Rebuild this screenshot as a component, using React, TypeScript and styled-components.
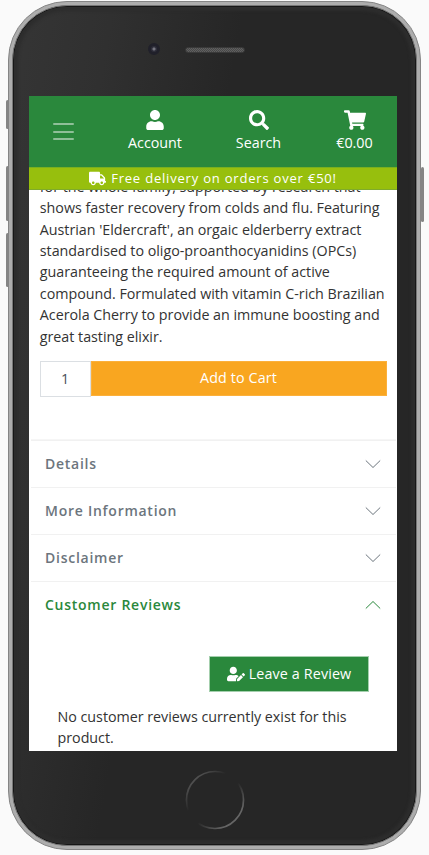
import React from "react";
import styled, { createGlobalStyle } from "styled-components";
import { FaUser, FaSearch, FaShoppingCart, FaTruck, FaUserEdit } from "react-icons/fa";

const GlobalStyle = createGlobalStyle`
  * { box-sizing: border-box; }
  body {
    margin: 0;
    background: #fafafa;
    font-family: "Open Sans", "Noto Sans", sans-serif;
    font-size: 14.3px;
    color: #333;
    overflow: hidden;
  }
`;

const Stage = styled.main`
  width: 429px;
  height: 855px;
  padding: 1px 0 0 8px;
`;

const Phone = styled.div`
  position: relative;
  width: 413px;
  height: 849px;
  border-radius: 59px;
  border: 1px solid #858585;
  background: #adadad;
  padding: 3px;
`;

const Rim = styled.div`
  height: 100%;
  border-radius: 55px;
  border: 1px solid #777;
  background: #171717;
  padding: 1px;
`;

const Bezel = styled.div`
  height: 100%;
  border-radius: 53px;
  background: linear-gradient(100deg, #353535 0, #303030 18%, #262626 42%, #262626 100%);
  box-shadow: inset 0 0 3px 4px #2d2d2d;
  display: flex;
  flex-direction: column;
  padding: 0 18px 0 15px;
`;

const SideKey = styled.i<{ $top: number; $height: number; $right?: boolean }>`
  position: absolute;
  ${(p) => (p.$right ? "right: -4px" : "left: -3px")};
  top: ${(p) => p.$top}px;
  width: 3px;
  height: ${(p) => p.$height}px;
  background: #858585;
  border-radius: 2px;
`;

const TopBezel = styled.div`
  height: 89px;
  flex: none;
  display: flex;
  padding: 36px 0 0 119px;
`;

const Camera = styled.i`
  width: 12px;
  height: 12px;
  border-radius: 50%;
  border: 3px solid #20202a;
  background: radial-gradient(circle, #777781 0 1px, #30303c 2px);
`;

const Speaker = styled.i`
  width: 60px;
  height: 6px;
  margin: 4px 0 0 25px;
  border-radius: 3px;
  border: 1px solid #393939;
  background: repeating-conic-gradient(#606060 0 25%, #484848 0 50%) 0 0 / 2px 2px;
`;

const Screen = styled.div`
  width: 368px;
  height: 655px;
  flex: none;
  background: #fff;
  overflow: hidden;
  display: flex;
  flex-direction: column;
`;

const Header = styled.header`
  height: 71px;
  flex: none;
  background: #2a883c;
  color: #fff;
  display: flex;
  padding: 0 0 0 24px;
`;

const MenuButton = styled.div`
  width: 21px;
  height: 17px;
  margin: 27px 36px 0 0;
  display: flex;
  flex-direction: column;
  justify-content: space-between;
`;

const MenuLine = styled.i`
  height: 2px;
  border-radius: 1px;
  background: #8fbf98;
`;

const NavItem = styled.div<{ $width: number }>`
  width: ${(p) => p.$width}px;
  flex: none;
  padding-top: 14px;
  display: flex;
  flex-direction: column;
  align-items: center;
  line-height: 22px;
  svg { height: 20px; margin-bottom: 2px; }
`;

const Banner = styled.div`
  height: 23px;
  flex: none;
  background: #97bf0d;
  border-top: 1px solid #79af1f;
  border-bottom: 1px solid #7fab2c;
  color: #fff;
  display: flex;
  justify-content: center;
  align-items: center;
  gap: 5px;
  font-size: 13px;
  font-weight: 500;
  letter-spacing: 0.8px;
  line-height: 21px;
`;

const Clip = styled.section`
  height: 158px;
  flex: none;
  overflow: hidden;
  display: flex;
  flex-direction: column;
  justify-content: flex-end;
  padding: 0 10.8px 1px;
`;

const Copy = styled.p`
  margin: 0;
  line-height: 21.4px;
  letter-spacing: -0.02px;
  white-space: pre;
`;

const CartRow = styled.div`
  height: 36px;
  flex: none;
  display: flex;
  margin: 13px 10px 0 11px;
`;

const Quantity = styled.div`
  width: 51px;
  border: 1px solid #dbdfe3;
  display: flex;
  align-items: center;
  justify-content: center;
  padding: 0 1px 1px 0;
  color: #495057;
`;

const AddButton = styled.div`
  flex: 1;
  height: 35px;
  background: #f9a620;
  border: 1px solid #fbb03b;
  color: #fff;
  display: flex;
  align-items: center;
  justify-content: center;
  padding: 0 1px 2px 0;
  letter-spacing: 0.14px;
`;

const Accordion = styled.div`
  margin: 42px 1px 0 2px;
  border-top: 1px solid #f6f6f6;
  flex: none;
`;

const AccordionRow = styled.div<{ $open?: boolean }>`
  height: 47px;
  border-top: 1px solid #f1f1f1;
  display: flex;
  justify-content: space-between;
  align-items: center;
  padding: 0 15px 1px 14px;
  color: ${(p) => (p.$open ? "#2a883c" : "#6c757d")};
  font-size: 14px;
  font-weight: 600;
  letter-spacing: 0.74px;
`;

const ReviewBar = styled.div`
  display: flex;
  justify-content: flex-end;
  padding: 28px 28px 0 0;
`;

const ReviewButton = styled.div`
  width: 160px;
  height: 36px;
  border: 1px solid #a4cfad;
  background: #2a883c;
  color: #fff;
  display: flex;
  justify-content: center;
  align-items: center;
  gap: 4px;
  padding-bottom: 1px;
  letter-spacing: 0.14px;
`;

const EmptyReviews = styled(Copy)`
  padding: 14px 0 0 28.5px;
`;

const BottomBezel = styled.div`
  flex: 1;
  display: flex;
  justify-content: center;
  padding: 18px 0 0 4px;
`;

const HomeRing = styled.svg`
  flex: none;
`;

function Chevron({ up }: { up?: boolean }) {
  return (
    <svg width="16" height="10" viewBox="0 0 16 10" fill="none" stroke="currentColor" strokeWidth="1">
      <path d={up ? "M.8 8.5 8 1.5l7.2 7" : "M.8 1.5 8 8.5l7.2-7"} />
    </svg>
  );
}

const description = [
  "for the whole family, supported by research that",
  "shows faster recovery from colds and flu. Featuring",
  "Austrian 'Eldercraft', an orgaic elderberry extract",
  "standardised to oligo-proanthocyanidins (OPCs)",
  "guaranteeing the required amount of active",
  "compound. Formulated with vitamin C-rich Brazilian",
  "Acerola Cherry to provide an immune boosting and",
  "great tasting elixir.",
].join("\n");

export default function App() {
  return (
    <>
      <GlobalStyle />
      <Stage>
        <Phone>
          <SideKey $top={98} $height={29} />
          <SideKey $top={164} $height={55} />
          <SideKey $top={231} $height={54} />
          <SideKey $top={165} $height={55} $right />
          <Rim>
            <Bezel>
              <TopBezel>
                <Camera />
                <Speaker />
              </TopBezel>
              <Screen>
                <Header>
                  <MenuButton><MenuLine /><MenuLine /><MenuLine /></MenuButton>
                  <NavItem $width={90}><FaUser size={18} />Account</NavItem>
                  <NavItem $width={117}><FaSearch size={20} />Search</NavItem>
                  <NavItem $width={75}><FaShoppingCart size={22} />€0.00</NavItem>
                </Header>
                <Banner><FaTruck size={17} />Free delivery on orders over €50!</Banner>
                <Clip><Copy>{description}</Copy></Clip>
                <CartRow>
                  <Quantity>1</Quantity>
                  <AddButton>Add to Cart</AddButton>
                </CartRow>
                <Accordion>
                  <AccordionRow>Details<Chevron /></AccordionRow>
                  <AccordionRow>More Information<Chevron /></AccordionRow>
                  <AccordionRow>Disclaimer<Chevron /></AccordionRow>
                  <AccordionRow $open>Customer Reviews<Chevron up /></AccordionRow>
                </Accordion>
                <ReviewBar>
                  <ReviewButton><FaUserEdit size={18} />Leave a Review</ReviewButton>
                </ReviewBar>
                <EmptyReviews>{"No customer reviews currently exist for this\nproduct."}</EmptyReviews>
              </Screen>
              <BottomBezel>
                <HomeRing width="62" height="62" viewBox="0 0 62 62" fill="none">
                  <defs>
                    <linearGradient id="ring" x1="0" y1="0" x2="1" y2="1">
                      <stop offset="0.12" stopColor="#555" />
                      <stop offset="0.36" stopColor="#262626" />
                      <stop offset="0.55" stopColor="#262626" />
                      <stop offset="0.82" stopColor="#666" />
                    </linearGradient>
                  </defs>
                  <circle cx="31" cy="31" r="28.5" stroke="url(#ring)" strokeWidth="1.7" />
                </HomeRing>
              </BottomBezel>
            </Bezel>
          </Rim>
        </Phone>
      </Stage>
    </>
  );
}
